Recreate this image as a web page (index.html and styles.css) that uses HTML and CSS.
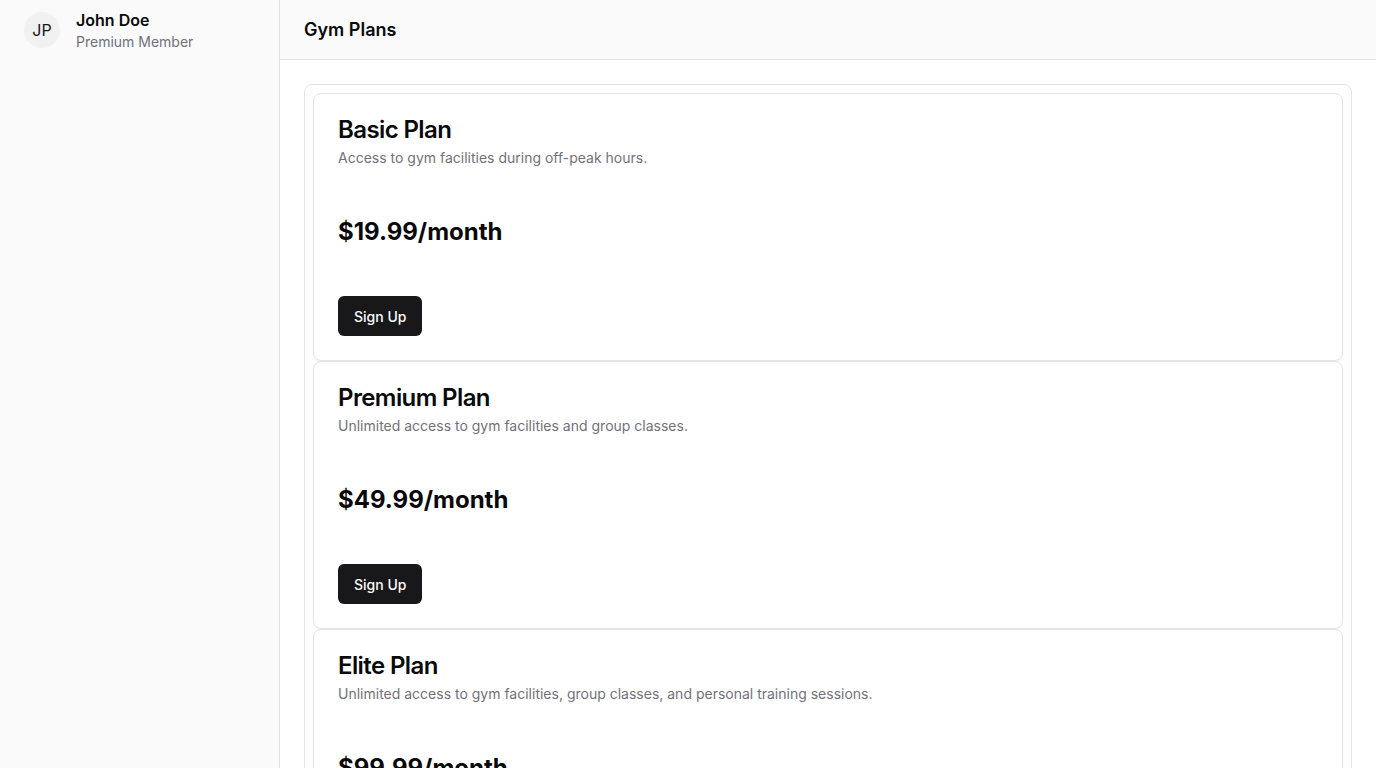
FILE: index.html
```html
<!DOCTYPE html>
<html lang="en">
<head>
<meta charset="utf-8">
<title>Gym Plans</title>
<link rel="stylesheet" href="styles.css">
</head>
<body>
<div class="layout">
  <aside class="sidebar">
    <div class="profile">
      <div class="avatar">JP</div>
      <div class="profile-text">
        <div class="name">John Doe</div>
        <div class="role">Premium Member</div>
      </div>
    </div>
  </aside>
  <div class="main">
    <header class="topbar">
      <h1 class="page-title">Gym Plans</h1>
    </header>
    <main class="content">
      <div class="plans">
        <div class="card">
          <div class="card-header">
            <h3 class="card-title">Basic Plan</h3>
            <p class="card-desc">Access to gym facilities during off-peak hours.</p>
          </div>
          <div class="card-content">
            <p class="price">$19.99/month</p>
          </div>
          <div class="card-footer">
            <button class="btn">Sign Up</button>
          </div>
        </div>
        <div class="card">
          <div class="card-header">
            <h3 class="card-title">Premium Plan</h3>
            <p class="card-desc">Unlimited access to gym facilities and group classes.</p>
          </div>
          <div class="card-content">
            <p class="price">$49.99/month</p>
          </div>
          <div class="card-footer">
            <button class="btn">Sign Up</button>
          </div>
        </div>
        <div class="card">
          <div class="card-header">
            <h3 class="card-title">Elite Plan</h3>
            <p class="card-desc">Unlimited access to gym facilities, group classes, and personal training sessions.</p>
          </div>
          <div class="card-content">
            <p class="price">$99.99/month</p>
          </div>
          <div class="card-footer">
            <button class="btn">Sign Up</button>
          </div>
        </div>
      </div>
    </main>
  </div>
</div>
</body>
</html>
```

FILE: styles.css
```css
* { box-sizing: border-box; }
html, body { margin: 0; padding: 0; }
body {
  font-family: Inter, "Noto Sans", "Liberation Sans", sans-serif;
  color: #09090b;
  background: #ffffff;
}
.layout {
  display: flex;
  min-height: 100vh;
}
.sidebar {
  width: 280px;
  flex-shrink: 0;
  background: #fafafa;
  border-right: 1px solid #e4e4e7;
  padding: 8px 24px;
}
.profile {
  display: flex;
  align-items: center;
  gap: 16px;
}
.avatar {
  width: 36px;
  height: 36px;
  border-radius: 50%;
  background: #f1f1f2;
  display: flex;
  align-items: center;
  justify-content: center;
  font-size: 16px;
  color: #18181b;
}
.name {
  font-size: 16px;
  line-height: 24px;
  font-weight: 600;
}
.role {
  font-size: 14px;
  line-height: 20px;
  color: #71717a;
}
.main {
  flex: 1;
  display: flex;
  flex-direction: column;
  min-width: 0;
}
.topbar {
  height: 60px;
  background: #fafafa;
  border-bottom: 1px solid #e4e4e7;
  padding: 0 24px;
  display: flex;
  align-items: center;
}
.page-title {
  margin: 0;
  font-size: 18px;
  font-weight: 600;
  line-height: 28px;
}
.content {
  padding: 24px;
}
.plans {
  border: 1px solid #e4e4e7;
  border-radius: 8px;
  padding: 8px;
}
.card {
  border: 1px solid #e4e4e7;
  border-radius: 8px;
  background: #fff;
  box-shadow: 0 1px 2px rgba(0,0,0,0.04);
}
.card-header {
  padding: 24px;
  display: flex;
  flex-direction: column;
  gap: 6px;
}
.card-title {
  margin: 0;
  font-size: 24px;
  line-height: 24px;
  font-weight: 600;
  letter-spacing: -0.6px;
}
.card-desc {
  margin: 0;
  font-size: 14px;
  line-height: 20px;
  color: #71717a;
}
.card-content {
  padding: 0 24px 24px;
}
.price {
  margin: 24px 0;
  font-size: 24px;
  line-height: 32px;
  font-weight: 700;
}
.card-footer {
  padding: 0 24px 24px;
  display: flex;
  align-items: center;
}
.btn {
  height: 40px;
  padding: 0 16px;
  border: none;
  border-radius: 6px;
  background: #18181b;
  color: #fafafa;
  font-family: inherit;
  font-size: 14px;
  font-weight: 500;
}
```
